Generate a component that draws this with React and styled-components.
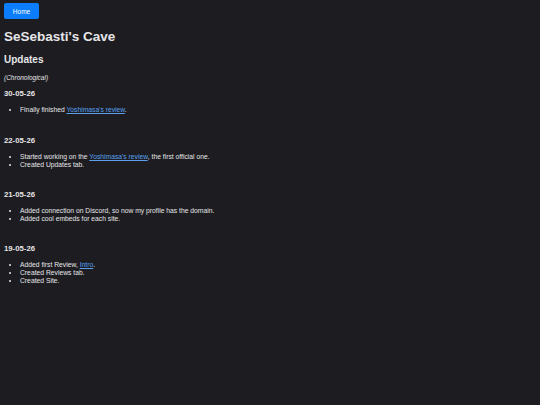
import styled, { createGlobalStyle } from "styled-components";

const Global = createGlobalStyle`
  html, body {
    margin: 0;
    background: #1c1c21;
    color: #e6e6e8;
    font-family: "Liberation Sans", Arial, sans-serif;
  }
`;

const Page = styled.div`
  padding: 3px 4px;
`;

const HomeButton = styled.a`
  display: flex;
  align-items: center;
  justify-content: center;
  width: 35px;
  height: 16px;
  background: #0b7dfd;
  color: #fff;
  border-radius: 2px;
  font-size: 6.5px;
  text-decoration: none;
`;

const Title = styled.h1`
  margin: 10px 0 0;
  font-size: 13.5px;
  line-height: 16px;
`;

const Heading = styled.h2`
  margin: 9px 0 0;
  font-size: 10px;
  line-height: 12px;
`;

const Note = styled.p`
  margin: 7px 0 0;
  font-size: 6.5px;
  line-height: 9px;
  font-style: italic;
`;

const Entry = styled.section`
  margin-top: ${(p) => p.$gap}px;
`;

const Date = styled.h3`
  margin: 0;
  font-size: 7.75px;
  line-height: 10px;
`;

const List = styled.ul`
  margin: 7px 0 0;
  padding-left: 16px;
  font-size: 6.75px;
  line-height: 8px;
`;

const A = styled.a`
  color: #5aa0ef;
`;

const entries = [
  {
    date: "30-05-26",
    gap: 7,
    items: [
      <>Finally finished <A href="#">Yoshimasa's review</A>.</>,
    ],
  },
  {
    date: "22-05-26",
    gap: 22,
    items: [
      <>Started working on the <A href="#">Yoshimasa's review</A>, the first official one.</>,
      <>Created Updates tab.</>,
    ],
  },
  {
    date: "21-05-26",
    gap: 21,
    items: [
      <>Added connection on Discord, so now my profile has the domain.</>,
      <>Added cool embeds for each site.</>,
    ],
  },
  {
    date: "19-05-26",
    gap: 21,
    items: [
      <>Added first Review, <A href="#">Intro</A>.</>,
      <>Created Reviews tab.</>,
      <>Created Site.</>,
    ],
  },
];

export default function App() {
  return (
    <Page>
      <Global />
      <HomeButton href="#">Home</HomeButton>
      <Title>SeSebasti's Cave</Title>
      <Heading>Updates</Heading>
      <Note>(Chronological)</Note>
      {entries.map((e) => (
        <Entry key={e.date} $gap={e.gap}>
          <Date>{e.date}</Date>
          <List>
            {e.items.map((it, i) => (
              <li key={i}>{it}</li>
            ))}
          </List>
        </Entry>
      ))}
    </Page>
  );
}
